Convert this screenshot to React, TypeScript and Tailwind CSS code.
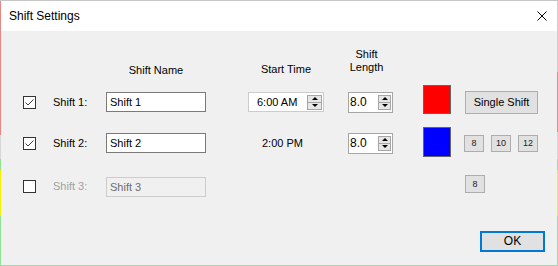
import React from "react";

function Check({ checked }: { checked: boolean }) {
  return (
    <div className="w-[13px] h-[13px] border border-[#333333] bg-white flex items-center justify-center">
      {checked && (
        <svg width="11" height="11" viewBox="0 0 11 11">
          <path d="M1.5 5.5 L4 8 L9.5 2.5" fill="none" stroke="#3c3c3c" strokeWidth="1" />
        </svg>
      )}
    </div>
  );
}

function Spinner({ w }: { w: string }) {
  return (
    <div className={`${w} h-[15px] border border-[#a6a6a6] bg-[#e6e6e6] flex flex-col`}>
      <div className="flex-1 flex items-center justify-center border-b border-[#a6a6a6]">
        <svg width="6" height="3" viewBox="0 0 6 3">
          <path d="M0 3 L3 0 L6 3 Z" fill="#000" />
        </svg>
      </div>
      <div className="flex-1 flex items-center justify-center">
        <svg width="6" height="3" viewBox="0 0 6 3">
          <path d="M0 0 L3 3 L6 0 Z" fill="#000" />
        </svg>
      </div>
    </div>
  );
}

function LengthBox() {
  return (
    <div className="w-[45px] h-[21px] border border-[#a6a6a6] bg-white flex items-center pl-[1px] pr-[1px]">
      <span className="flex-1 text-[12px]">8.0</span>
      <Spinner w="w-[13px]" />
    </div>
  );
}

function SmallBtn({ label }: { label: string }) {
  return (
    <div className="w-[20px] h-[17px] border border-[#adadad] bg-[#e1e1e1] flex items-center justify-center text-[9px] text-[#222]">
      {label}
    </div>
  );
}

export default function App() {
  const strip = (segs: [string, number][]) => (
    <div className="w-px flex flex-col">
      {segs.map(([c, h], i) => (
        <div key={i} style={{ backgroundColor: c, height: h }} />
      ))}
    </div>
  );
  const red = "#e88585";
  const green = "#90e592";
  const yellow = "#f2f200";
  return (
    <div className="w-[558px] h-[266px] flex flex-col text-black [font-family:'Liberation_Sans',Arial,sans-serif] text-[11px] leading-[13px]">
      <div className="h-px bg-[#c6c6c6]" />
      <div className="flex flex-1">
        {strip([
          [red, 134],
          ["#d6d6d6", 24],
          [green, 11],
          [yellow, 46],
          [green, 49],
        ])}
        <div className="flex-1 flex flex-col">
          <div className="h-[30px] bg-white flex items-center justify-between pl-[8px] pr-[10px]">
            <span className="text-[12px]">Shift Settings</span>
            <svg width="10" height="10" viewBox="0 0 10 10">
              <path d="M0.5 0.5 L9.5 9.5 M9.5 0.5 L0.5 9.5" stroke="#000" strokeWidth="1" />
            </svg>
          </div>
          <div className="flex-1 bg-[#f0f0f0] flex flex-col">
            {/* header */}
            <div className="mt-[17px] h-[26px] flex items-start pl-[22px]">
              <div className="w-[83px]" />
              <div className="w-[100px] text-center mt-[16px]">Shift Name</div>
              <div className="w-[76px] ml-[42px] text-center mt-[15px]">Start Time</div>
              <div className="w-[45px] ml-[24px] text-center pr-[8px]">
                <div>Shift</div>
                <div>Length</div>
              </div>
            </div>

            {/* row 1 */}
            <div className="mt-[11px] h-[34px] flex items-center pl-[22px]">
              <div className="w-[30px]">
                <Check checked />
              </div>
              <div className="w-[53px]">Shift 1:</div>
              <div className="w-[100px] h-[20px] border border-[#7a7a7a] bg-white flex items-center pl-[3px]">
                Shift 1
              </div>
              <div className="w-[76px] h-[20px] ml-[42px] border border-[#cccccc] bg-white flex items-center pl-[8px] pr-[1px]">
                <span className="flex-1">6:00 AM</span>
                <Spinner w="w-[15px]" />
              </div>
              <div className="ml-[24px]">
                <LengthBox />
              </div>
              <div className="ml-[30px] w-[28px] h-[29px] mb-[5px] border border-[#646464] bg-[#ff0000]" />
              <div className="ml-[14px] w-[73px] h-[23px] border border-[#adadad] bg-[#e1e1e1] flex items-center justify-center">
                Single Shift
              </div>
            </div>

            {/* row 2 */}
            <div className="mt-[7px] h-[34px] flex items-center pl-[22px]">
              <div className="w-[30px]">
                <Check checked />
              </div>
              <div className="w-[53px]">Shift 2:</div>
              <div className="w-[100px] h-[20px] border border-[#7a7a7a] bg-white flex items-center pl-[3px]">
                Shift 2
              </div>
              <div className="w-[76px] ml-[42px] pl-[14px]">2:00 PM</div>
              <div className="ml-[24px]">
                <LengthBox />
              </div>
              <div className="ml-[30px] w-[28px] h-[30px] mb-[3px] border border-[#646464] bg-[#0000ff]" />
              <div className="ml-[13px] flex gap-[7px]">
                <SmallBtn label="8" />
                <SmallBtn label="10" />
                <SmallBtn label="12" />
              </div>
            </div>

            {/* row 3 */}
            <div className="mt-[9px] h-[34px] flex items-center pl-[22px]">
              <div className="w-[30px]">
                <Check checked={false} />
              </div>
              <div className="w-[53px] text-[#a0a0a0]">Shift 3:</div>
              <div className="w-[100px] h-[20px] mt-[2px] border border-[#cccccc] bg-[#f0f0f0] flex items-center pl-[3px] text-[#6d6d6d]">
                Shift 3
              </div>
              <div className="ml-[259px] mb-[4px] w-[20px] h-[18px] border border-[#adadad] bg-[#e1e1e1] flex items-center justify-center text-[9px] text-[#222]">
                8
              </div>
            </div>

            {/* footer */}
            <div className="mt-[28px] flex justify-end pr-[12px]">
              <div className="w-[65px] h-[21px] border-2 border-[#0078d7] bg-[#e1e1e1] flex items-center justify-center text-[12px]">
                OK
              </div>
            </div>
          </div>
        </div>
        {strip([
          ["#cfcfcf", 71],
          [red, 60],
          ["#d6d6d6", 27],
          [green, 11],
          [yellow, 46],
          [green, 49],
        ])}
      </div>
      <div className="h-px" style={{ backgroundColor: green }} />
    </div>
  );
}
